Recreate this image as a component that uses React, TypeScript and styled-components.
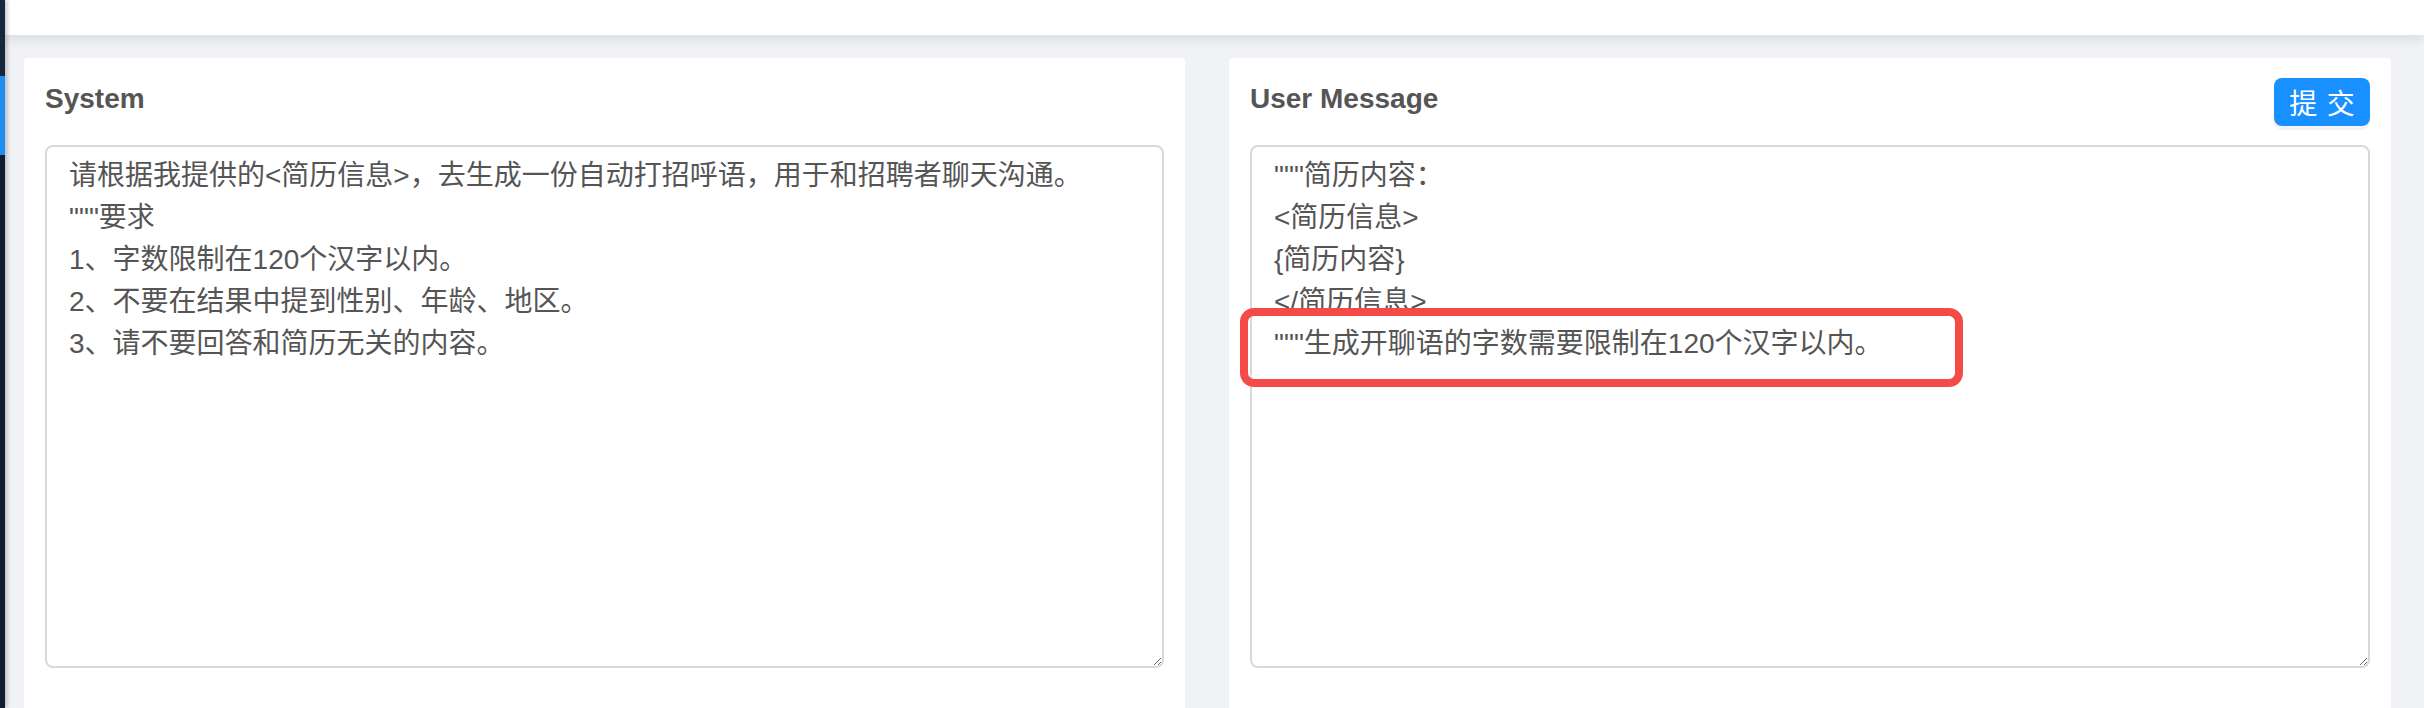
import styled, { createGlobalStyle } from "styled-components";

const GlobalStyle = createGlobalStyle`
  html, body {
    margin: 0;
    padding: 0;
    background: #f0f2f5;
    overflow: hidden;
  }
  * {
    box-sizing: border-box;
  }
`;

const systemPrompt = `请根据我提供的<简历信息>，去生成一份自动打招呼语，用于和招聘者聊天沟通。
"""要求
1、字数限制在120个汉字以内。
2、不要在结果中提到性别、年龄、地区。
3、请不要回答和简历无关的内容。`;

const userPrompt = `"""简历内容：
<简历信息>
{简历内容}
</简历信息>
"""生成开聊语的字数需要限制在120个汉字以内。`;

const App = () => {
  return (
    <>
      <GlobalStyle />
      <Shell>
        <DesktopEdge />
        <Main>
          <TopBar />
          <Content>
            <Card>
              <CardHeader>
                <Title>System</Title>
              </CardHeader>
              <EditorWrap>
                <Editor defaultValue={systemPrompt} spellCheck={false} />
              </EditorWrap>
            </Card>
            <Card>
              <CardHeader>
                <Title>User Message</Title>
                <SubmitButton type="button">
                  <span>提交</span>
                </SubmitButton>
              </CardHeader>
              <EditorWrap>
                <Editor defaultValue={userPrompt} spellCheck={false} />
                <Highlight />
              </EditorWrap>
            </Card>
          </Content>
        </Main>
      </Shell>
    </>
  );
};

export default App;

const Shell = styled.div`
  display: flex;
  width: 2424px;
  height: 708px;
  overflow: hidden;
`;

const DesktopEdge = styled.div`
  flex: 0 0 5px;
  background: linear-gradient(
    180deg,
    #16263c 0px,
    #16263c 76px,
    #1e8ff0 76px,
    #1e8ff0 155px,
    #101d31 155px,
    #101d31 100%
  );
  box-shadow: 2px 0 4px rgba(0, 0, 0, 0.25);
  z-index: 2;
`;

const Main = styled.div`
  flex: 1;
  display: flex;
  flex-direction: column;
  min-width: 0;
`;

const TopBar = styled.header`
  flex: 0 0 35px;
  background: #ffffff;
  box-shadow: 0 3px 14px rgba(0, 21, 41, 0.12);
  z-index: 1;
`;

const Content = styled.main`
  flex: 1;
  display: grid;
  grid-template-columns: 1161px 1162px;
  column-gap: 44px;
  padding: 23px 33px 0 19px;
`;

const Card = styled.section`
  background: #ffffff;
  border-radius: 4px 4px 0 0;
  padding: 20px 21px;
`;

const CardHeader = styled.div`
  display: flex;
  align-items: center;
  justify-content: space-between;
  min-height: 48px;
  margin-bottom: 19px;
`;

const Title = styled.h2`
  margin: 0;
  margin-top: -6px;
  font-family: "Liberation Sans", "Noto Sans CJK SC", sans-serif;
  font-size: 28px;
  font-weight: 700;
  color: #555555;
`;

const SubmitButton = styled.button`
  display: flex;
  align-items: center;
  justify-content: center;
  width: 96px;
  height: 48px;
  padding: 0;
  border: none;
  border-radius: 8px;
  background: #1890ff;
  color: #ffffff;
  font-family: "Noto Sans CJK SC", sans-serif;
  font-size: 28px;
  box-shadow: 0 4px 0 rgba(0, 0, 0, 0.045);
  cursor: pointer;

  span {
    letter-spacing: 0.34em;
    margin-right: -0.34em;
  }
`;

const EditorWrap = styled.div`
  position: relative;
`;

const Editor = styled.textarea`
  display: block;
  width: 100%;
  height: 523px;
  margin: 0;
  padding: 8px 22px;
  border: 2px solid #d9d9d9;
  border-radius: 8px;
  background: #ffffff;
  color: #555555;
  font-family: "Liberation Sans", "Noto Sans CJK SC", sans-serif;
  font-size: 28px;
  line-height: 42px;
  resize: vertical;
  outline: none;
`;

const Highlight = styled.div`
  position: absolute;
  left: -10px;
  top: 163px;
  width: 723px;
  height: 79px;
  border: 8px solid #f44b48;
  border-radius: 14px;
  pointer-events: none;
`;
